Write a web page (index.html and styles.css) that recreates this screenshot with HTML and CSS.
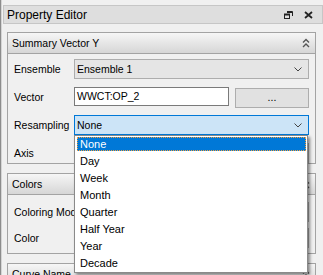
FILE: index.html
```html
<!DOCTYPE html>
<html>
<head>
    <title>Property Editor</title>
    <link rel="stylesheet" href="styles.css">
</head>
<body>
    <div class="dock">
        <div class="dock-title">
            <span>Property Editor</span>
            <span class="title-buttons">
                <svg width="9" height="8" viewBox="0 0 9 8"><path d="M3 0.5h5.5v4.5M3 1.5h5.5" fill="none" stroke="#222" stroke-width="1"/><rect x="0.5" y="3" width="5" height="4.5" fill="none" stroke="#222"/><rect x="0.5" y="3" width="5" height="1.5" fill="#222"/></svg>
                <svg width="9" height="8" viewBox="0 0 9 8"><path d="M1 1l7 6M8 1l-7 6" stroke="#222" stroke-width="1.8"/></svg>
            </span>
        </div>
        <div class="dock-body">
            <section class="group">
                <div class="group-head">
                    <span>Summary Vector Y</span>
                    <svg class="collapse" width="8" height="10" viewBox="0 0 8 10"><path d="M1 4.5l3-3 3 3M1 9l3-3 3 3" fill="none" stroke="#555" stroke-width="1.4"/></svg>
                </div>
                <div class="group-body">
                    <div class="row">
                        <label>Ensemble</label>
                        <div class="combo">Ensemble 1<svg class="arrow" width="8" height="5" viewBox="0 0 8 5"><path d="M0.5 0.5l3.5 3.5 3.5-3.5" fill="none" stroke="#444"/></svg></div>
                    </div>
                    <div class="row">
                        <label>Vector</label>
                        <div class="pair">
                            <div class="textbox">WWCT:OP_2</div>
                            <div class="button">...</div>
                        </div>
                    </div>
                    <div class="row">
                        <label>Resampling</label>
                        <div class="combo-wrap">
                            <div class="combo combo-open">None<svg class="arrow" width="8" height="5" viewBox="0 0 8 5"><path d="M0.5 0.5l3.5 3.5 3.5-3.5" fill="none" stroke="#444"/></svg></div>
                            <ul class="popup">
                                <li class="selected">None</li>
                                <li>Day</li>
                                <li>Week</li>
                                <li>Month</li>
                                <li>Quarter</li>
                                <li>Half Year</li>
                                <li>Year</li>
                                <li>Decade</li>
                            </ul>
                        </div>
                    </div>
                    <div class="row">
                        <label>Axis</label>
                        <div class="combo"></div>
                    </div>
                </div>
            </section>
            <section class="group">
                <div class="group-head">
                    <span>Colors</span>
                    <svg class="collapse" width="8" height="10" viewBox="0 0 8 10"><path d="M1 4.5l3-3 3 3M1 9l3-3 3 3" fill="none" stroke="#555" stroke-width="1.4"/></svg>
                </div>
                <div class="group-body group-body-colors">
                    <div class="row">
                        <label>Coloring Mode</label>
                        <div class="combo"></div>
                    </div>
                    <div class="row">
                        <label>Color</label>
                        <div class="combo"></div>
                    </div>
                </div>
            </section>
            <section class="group">
                <div class="group-head">
                    <span>Curve Name</span>
                    <svg class="collapse" width="8" height="10" viewBox="0 0 8 10"><path d="M1 4.5l3-3 3 3M1 9l3-3 3 3" fill="none" stroke="#555" stroke-width="1.4"/></svg>
                </div>
            </section>
        </div>
    </div>
</body>
</html>
```

FILE: styles.css
```css
body {
    margin: 0;
    height: 275px;
    overflow: hidden;
    background-color: #f0f0f0;
    font-family: "Liberation Sans", Arial, sans-serif;
    font-size: 10.5px;
    color: #000;
}

.dock {
    height: 275px;
    border-left: 1px solid #8c8c8c;
    box-shadow: inset 1px 0 0 #d4d4d4;
    padding-top: 5px;
    box-sizing: border-box;
}

.dock-title {
    display: flex;
    align-items: center;
    justify-content: space-between;
    margin-left: 2px;
    height: 19px;
    box-sizing: border-box;
    border: 1px solid #c6c6c6;
    background-color: #dedede;
    padding: 0 9px 0 3px;
    font-size: 12px;
}

.title-buttons {
    display: flex;
    gap: 11px;
    align-items: center;
}

.dock-body {
    display: flex;
    flex-direction: column;
    gap: 9px;
    margin: 8px 7px 0 6px;
}

.group {
    border: 1px solid #a3a3a3;
    background-color: #f0f0f0;
}

.group-head {
    display: flex;
    align-items: center;
    justify-content: space-between;
    height: 20px;
    padding: 0 5px 0 4px;
    background: linear-gradient(#f6f6f6, #d6d6d6);
    border-bottom: 1px solid #a3a3a3;
}

.group-body {
    display: flex;
    flex-direction: column;
    gap: 8px;
    padding: 5px 6px 0 6px;
}

.group-body-colors {
    gap: 6px;
    padding-top: 7px;
    padding-bottom: 5px;
}

.row {
    display: flex;
    align-items: center;
    height: 20px;
}

.row label {
    width: 60px;
    flex: none;
    white-space: nowrap;
}

.combo {
    flex: 1;
    display: flex;
    align-items: center;
    justify-content: space-between;
    height: 20px;
    box-sizing: border-box;
    padding: 0 6px 0 2px;
    background-color: #e5e5e5;
    border: 1px solid #adadad;
}

.combo-open {
    background-color: #cce4f7;
    border-color: #0078d7;
}

.combo-wrap {
    flex: 1;
    display: flex;
    position: relative;
}

.pair {
    flex: 1;
    display: flex;
    gap: 6px;
}

.textbox {
    width: 155px;
    height: 19px;
    box-sizing: border-box;
    padding-left: 2px;
    line-height: 17px;
    background-color: #fff;
    border: 1px solid #7a7a7a;
}

.button {
    flex: 1;
    height: 20px;
    margin-top: 1px;
    box-sizing: border-box;
    text-align: center;
    line-height: 16px;
    background-color: #e1e1e1;
    border: 1px solid #adadad;
}

.popup {
    position: absolute;
    top: 100%;
    left: 0;
    right: 1px;
    margin: 0;
    padding: 0;
    list-style: none;
    background-color: #fff;
    border: 1px solid #8a8a8a;
    box-shadow: 2px 2px 3px rgba(0, 0, 0, 0.45);
    z-index: 5;
}

.popup li {
    height: 17px;
    line-height: 17px;
    padding-left: 5px;
    font-size: 11px;
}

.popup li.selected {
    height: 14px;
    line-height: 14px;
    margin: 1px 1px 2px 2px;
    padding-left: 3px;
    background-color: #0078d7;
    color: #fff;
    outline: 1px dotted #f0a040;
    outline-offset: -1px;
}
```
